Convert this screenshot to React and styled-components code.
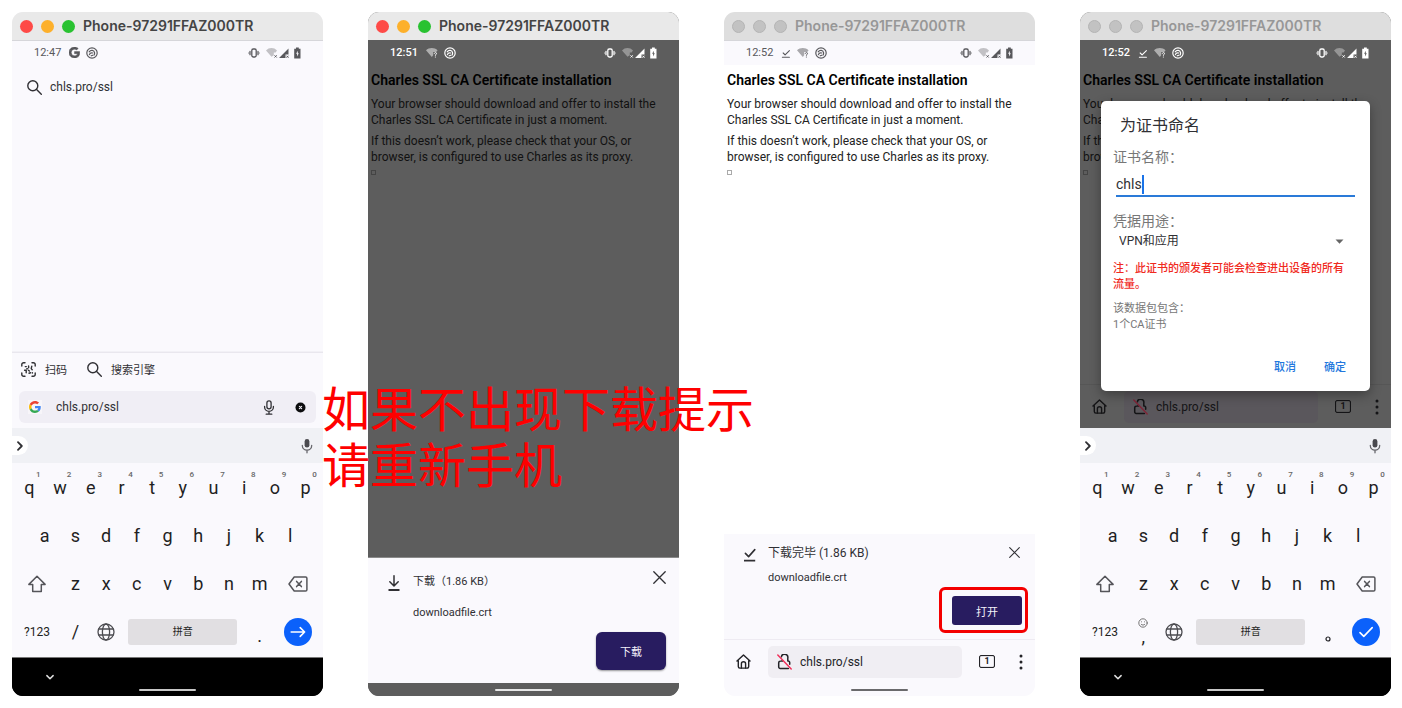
import React from "react";
import styled, { createGlobalStyle, css } from "styled-components";

const INK = "#303034";
const SHEET = "#faf9fd";
const DIM = "#5d5d5d";
const BRAND = "#281c60";
const LINK = "#2277dd";

const GlobalStyle = createGlobalStyle`
  * { box-sizing: border-box; }
  body {
    margin: 0;
    background: #fff;
    font-family: Roboto, "Noto Sans CJK SC", sans-serif;
    color: ${INK};
  }
  button, input, select {
    font: inherit;
    color: inherit;
    margin: 0;
    padding: 0;
    border: 0;
    background: none;
    outline: none;
  }
  button { cursor: pointer; }
  svg { display: block; flex: none; }
`;

/* ---------- layout ---------- */

const Board = styled.main`
  position: relative;
  display: grid;
  grid-template-columns: repeat(4, minmax(0, 1fr));
  gap: 45px;
  min-height: 100vh;
  padding: 12px 11px 12px 12px;
`;

const Slot = styled.div`
  position: relative;
  display: flex;
  flex-direction: column;
`;

const Annotation = styled.p`
  position: absolute;
  z-index: 2;
  top: 366px;
  left: -46px;
  margin: 0;
  white-space: nowrap;
  font-family: "Noto Sans CJK SC", sans-serif;
  font-size: 48px;
  line-height: 56px;
  color: #f00;
`;

const Window = styled.section`
  position: relative;
  flex: 1;
  display: flex;
  flex-direction: column;
  overflow: hidden;
  border-radius: 11px;
  background: ${(p) => p.$bg};
`;

const TitleBar = styled.header`
  display: flex;
  align-items: center;
  gap: 8px;
  height: 28px;
  padding-left: 8px;
  background: ${(p) => (p.$inactive ? "#dedede" : "#e9e9e9")};
  color: ${(p) => (p.$inactive ? "#979797" : "#444")};
`;

const Light = styled.button`
  flex: none;
  width: 13px;
  height: 13px;
  border-radius: 50%;
  background: ${(p) => p.$color};
  ${(p) => p.$inactive && "border: 1px solid #b4b4b4;"}
`;

const WindowName = styled.h2`
  margin: 0;
  padding-bottom: 1px;
  font-family: Inter, sans-serif;
  font-size: 14px;
  line-height: 16px;
  font-weight: 600;
  white-space: nowrap;
`;

const StatusBar = styled.div`
  display: flex;
  align-items: center;
  gap: 6px;
  height: 25px;
  padding: 0 22px 1px;
  border-top: 1px solid ${(p) => (p.$dim ? DIM : "#d6d6da")};
  background: ${(p) => (p.$dim ? DIM : SHEET)};
  color: ${(p) => (p.$dim ? "#fff" : "#58585c")};
  font-size: 11px;
`;

const Clock = styled.time`
  margin-right: 2px;
  font-weight: ${(p) => (p.$dim ? 500 : 400)};
`;

const Spacer = styled.span`
  flex: 1;
`;

/* ---------- browser ---------- */

const Suggestion = styled.a`
  display: flex;
  align-items: center;
  gap: 8px;
  margin: 12px 15px 0;
  font-size: 12px;
  line-height: 20px;
  color: ${INK};
  text-decoration: none;
`;

const Fill = styled.div`
  flex: 1;
`;

const QuickActions = styled.div`
  display: flex;
  align-items: center;
  gap: 20px;
  height: 33px;
  padding: 0 9px;
  border-top: 1px solid #e9e7ee;
  box-shadow: 0 -1px 0 #f2f1f6;
`;

const QuickAction = styled.button`
  display: flex;
  align-items: center;
  gap: 9px;
  font-size: 11px;
`;

const SearchField = styled.label`
  display: flex;
  align-items: center;
  height: 32px;
  margin: 6px 7px 5px;
  padding: 0 10px 0 9px;
  border-radius: 6px;
  background: #f0eef5;
`;

const Favicon = styled.span`
  display: grid;
  place-items: center;
  width: 14px;
  height: 14px;
  margin-right: 14px;
  background: #f7f5f9;
`;

const UrlInput = styled.input`
  flex: 1;
  min-width: 0;
  font-size: 12px;
  line-height: 20px;
`;

const FieldButton = styled.button`
  margin-left: 20px;
`;

const Page = styled.article`
  flex: 1;
  padding: 7px 3px 0;
  background: ${(p) => (p.$dim ? DIM : "#fff")};
  color: ${(p) => (p.$dim ? "#111" : "#222")};
`;

const PageHeading = styled.h1`
  margin: 0 0 8px;
  font-size: 14px;
  line-height: 16px;
  font-weight: 600;
  color: #000;
`;

const Paragraph = styled.p`
  margin: 0 0 5px;
  font-size: 12px;
  line-height: 16px;
`;

const Placeholder = styled.span`
  display: block;
  width: 5px;
  height: 5px;
  border: 1px solid ${(p) => (p.$dim ? "#444" : "#aaa")};
`;

const BrowserBar = styled.nav`
  display: flex;
  align-items: center;
  height: 44px;
  padding: 0 12px;
  border-top: 1px solid ${(p) => (p.$dim ? "#565656" : "#eeebf2")};
  background: ${(p) => (p.$dim ? DIM : SHEET)};
  color: ${(p) => (p.$dim ? "#141416" : "#232327")};
`;

const Address = styled.label`
  flex: 1;
  min-width: 0;
  display: flex;
  align-items: center;
  gap: 8px;
  height: 32px;
  margin: 0 17px;
  padding: 0 9px;
  border-radius: 5px;
  background: ${(p) => (p.$dim ? "#5a575c" : "#f0eef3")};
`;

const TabCount = styled.button`
  display: grid;
  place-items: center;
  width: 16px;
  height: 13px;
  margin-right: 24px;
`;

const TabNumber = styled.span`
  display: grid;
  place-items: center;
  width: 16px;
  height: 13px;
  border: 1px solid currentColor;
  border-radius: 2px;
  box-shadow: inset 0 0 1px currentColor;
  font-size: 9px;
  line-height: 11px;
  font-weight: 700;
`;

/* ---------- download sheets ---------- */

const Sheet = styled.section`
  display: grid;
  grid-template-columns: 25px minmax(0, 1fr) auto;
  padding: ${(p) => (p.$done ? "8px 13px 14px 19px" : "13px 13px 13px 20px")};
  background: ${SHEET};
  ${(p) => !p.$done && "box-shadow: 0 -1px 0 #8a8a8a;"}
`;

const SheetTitle = styled.h3`
  margin: 0;
  font-size: ${(p) => (p.$large ? "12px" : "11px")};
  line-height: 22px;
  height: 20px;
  font-weight: 400;
`;

const FileName = styled.p`
  grid-column: 2;
  margin: ${(p) => (p.$done ? "6px 0 8px" : "12px 0 9px")};
  font-size: 11px;
  line-height: 20px;
`;

const CloseButton = styled.button`
  align-self: start;
  padding: ${(p) => (p.$small ? "5px 2px 4px" : "0")};
`;

const Primary = styled.button`
  position: relative;
  grid-column: 1 / -1;
  justify-self: end;
  width: 70px;
  height: ${(p) => (p.$done ? "29px" : "38px")};
  border-radius: ${(p) => (p.$done ? "3px" : "6px")};
  background: ${BRAND};
  box-shadow: ${(p) => (p.$done ? "none" : "0 1px 2px #0006")};
  color: #f3f1fa;
  font-size: 11px;
  ${(p) =>
    p.$done &&
    css`
      &::after {
        content: "";
        position: absolute;
        inset: -9px -6px -8px -13px;
        border: 3px solid #f40000;
        border-radius: 6px;
      }
    `}
`;

/* ---------- bottom navigation ---------- */

const HomeArea = styled.div`
  display: flex;
  justify-content: center;
  height: 13px;
  padding-top: 6px;
  background: ${(p) => p.$bg};
`;

const Indicator = styled.span`
  width: 57px;
  height: 2px;
  border-radius: 1px;
  background: ${(p) => p.$color};
`;

const NavBar = styled.div`
  display: flex;
  flex-direction: column;
  height: 39px;
  border-top: 1px solid #777;
  background: #000;
`;

const HideButton = styled.button`
  align-self: flex-start;
  height: 25px;
  padding: 13px 0 0 34px;
`;

/* ---------- keyboard ---------- */

const Tray = styled.div`
  display: flex;
  align-items: center;
  justify-content: space-between;
  height: 35px;
  padding-right: 10px;
  background: #f0f1f5;
`;

const Expand = styled.button`
  display: grid;
  place-items: center;
  width: 16px;
  height: 19px;
  border-radius: 0 10px 10px 0;
  background: #fff;
`;

const Keys = styled.div`
  display: grid;
  grid-template-columns: repeat(20, minmax(0, 1fr));
  grid-auto-rows: 48px;
  padding: 1px 2px;
  background: ${SHEET};
`;

const Key = styled.button`
  position: relative;
  display: grid;
  place-items: center;
  grid-column: ${(p) => (p.$start ? `${p.$start} / ` : "")}span ${(p) => p.$span || 2};
  font-size: ${(p) => (p.$small ? "12px" : "18px")};
  line-height: 24px;
  color: #1f1f23;
`;

const Hint = styled.small`
  position: absolute;
  top: 6px;
  left: 50%;
  width: 18px;
  text-align: center;
  font-size: 8px;
  line-height: 9px;
  font-weight: 500;
  color: #666;
`;

const Space = styled(Key)`
  height: 26px;
  margin: 0 7px;
  align-self: center;
  border-radius: 3px;
  background: #e1dfe2;
  font-size: 10px;
`;

const Enter = styled.span`
  display: grid;
  place-items: center;
  width: 28px;
  height: 28px;
  border-radius: 50%;
  background: #0b61fb;
`;

const Low = styled.span`
  padding-top: 8px;
  line-height: 20px;
`;

const Stacked = styled.span`
  display: flex;
  flex-direction: column;
  align-items: center;
  line-height: 18px;
`;

/* ---------- certificate dialog ---------- */

const Dialog = styled.form`
  position: absolute;
  z-index: 1;
  top: 89px;
  left: 21px;
  right: 21px;
  display: flex;
  flex-direction: column;
  padding: 13px 15px 11px 12px;
  border-radius: 5px;
  background: #fff;
  box-shadow: 0 4px 12px #0005;
`;

const DialogTitle = styled.h3`
  margin: 0 0 9px 7px;
  font-size: 16px;
  line-height: 24px;
  font-weight: 400;
`;

const FieldLabel = styled.label`
  font-size: 14px;
  line-height: 20px;
  color: #777;
`;

const NameField = styled.div`
  display: flex;
  align-items: center;
  height: 24px;
  margin: 6px 0 14px 3px;
  border-bottom: 2px solid #2a7ad8;
`;

const NameInput = styled.input`
  field-sizing: content;
  max-width: 100%;
  font-size: 14px;
  line-height: 20px;
`;

const Caret = styled.span`
  width: 2px;
  height: 19px;
  background: #1a73e8;
`;

const SelectWrap = styled.div`
  display: flex;
  align-items: center;
  padding: 0 11px 0 6px;
`;

const Usage = styled.select`
  flex: 1;
  appearance: none;
  height: 20px;
  font-size: 12px;
`;

const Warning = styled.p`
  margin: 10px 0 8px;
  padding-right: 7px;
  font-size: 11px;
  line-height: 16px;
  font-weight: 500;
  color: #f02a1e;
`;

const Summary = styled.p`
  margin: 0;
  font-size: 11px;
  line-height: 16px;
  color: #777;
`;

const Actions = styled.div`
  display: flex;
  justify-content: flex-end;
  gap: 28px;
  margin-top: 23px;
  padding-right: 9px;
`;

const TextButton = styled.button`
  font-size: 11px;
  line-height: 24px;
  font-weight: 500;
  color: ${LINK};
`;

/* ---------- icons ---------- */

const Svg = ({ w, h = w, box, children, sw = 2 }) => (
  <svg
    width={w}
    height={h}
    viewBox={box || `0 0 ${w} ${h}`}
    fill="none"
    stroke="currentColor"
    strokeWidth={sw}
    strokeLinecap="round"
    strokeLinejoin="round"
    aria-hidden="true"
  >
    {children}
  </svg>
);

const GoogleG = ({ size, mono }) => (
  <svg width={size} height={size} viewBox="0 0 48 48" aria-hidden="true">
    <g stroke={mono || "none"} strokeWidth={mono ? 2 : 0}>
      <path fill={mono || "#EA4335"} d="M24 9.5c3.54 0 6.71 1.22 9.21 3.6l6.85-6.85C35.9 2.38 30.47 0 24 0 14.62 0 6.51 5.38 2.56 13.22l7.98 6.19C12.43 13.72 17.74 9.5 24 9.5z" />
      <path fill={mono || "#4285F4"} d="M46.98 24.55c0-1.57-.15-3.09-.38-4.55H24v9.02h12.94c-.58 2.96-2.26 5.48-4.78 7.18l7.73 6c4.51-4.18 7.09-10.36 7.09-17.65z" />
      <path fill={mono || "#FBBC05"} d="M10.53 28.59A14.5 14.5 0 0 1 9.77 24c0-1.6.28-3.14.76-4.59l-7.98-6.19A23.9 23.9 0 0 0 0 24c0 3.88.92 7.54 2.56 10.78l7.97-6.19z" />
      <path fill={mono || "#34A853"} d="M24 48c6.48 0 11.93-2.13 15.89-5.81l-7.73-6c-2.15 1.45-4.92 2.3-8.16 2.3-6.26 0-11.57-4.22-13.47-9.91l-7.98 6.19C6.51 42.62 14.62 48 24 48z" />
    </g>
  </svg>
);

const SearchIcon = () => (
  <Svg w={15} box="0 0 15 15" sw={1.4}>
    <circle cx="5.8" cy="5.8" r="5" />
    <path d="M9.6 9.6l4.7 4.7" />
  </Svg>
);

const ScanIcon = () => (
  <Svg w={15} box="0 0 15 15" sw={1.4}>
    <path d="M.8 4V2.6A1.8 1.8 0 0 1 2.6.8H4M11 .8h1.4a1.8 1.8 0 0 1 1.8 1.8V4M14.2 11v1.4a1.8 1.8 0 0 1-1.8 1.8H11M4 14.2H2.6a1.8 1.8 0 0 1-1.8-1.8V11" />
    <path d="M4.3 4.6h1M3.6 8.2h1.6v2.6M7.6 4v1.8M7.4 8.2l1 .9M8 11.2l1.6-.4M10.8 4.2l-.6 2.4 1 1.2M11.4 10.6v.4M5.8 6.8h.6" />
  </Svg>
);

const LineMic = () => (
  <Svg w={12} h={15} sw={1.3}>
    <rect x="3.9" y=".8" width="4.2" height="8" rx="2.1" />
    <path d="M1.6 6.4v.6a4.4 4.4 0 0 0 8.8 0v-.6M6 11.4v2.8M3.2 14.2h5.6" />
  </Svg>
);

const SolidMic = () => (
  <Svg w={12} h={16} sw={1.3}>
    <rect x="3.6" y="1" width="4.8" height="8.6" rx="2.4" fill="#4a4a4f" stroke="none" />
    <path stroke="#66666b" d="M1.3 7.4a4.7 4.7 0 0 0 9.4 0M6 12.2v2.6" />
  </Svg>
);

const ClearIcon = () => (
  <Svg w={11} sw={1.2}>
    <circle cx="5.5" cy="5.500" r="5" fill="#0c0c0e" stroke="none" />
    <path stroke="#f0eef5" d="M4.4 4.4l2.200 2.200M6.600 4.4L4.400 6.600" />
  </Svg>
);

const SwirlIcon = () => (
  <Svg w={12} sw={1.2}>
    <circle cx="6" cy="6" r="5.2" />
    <path d="M3.200 4.800C4.800 2.600 8.200 3 8.600 5.800c.1.900-.1 1.600-.5 2.200" />
    <path d="M3.400 7.600c.700-1.600 2.100-2.100 3.300-1.600M5.200 8.800l1.700-.6" />
  </Svg>
);

const WifiUnknown = () => (
  <Svg w={12} h={11} sw={1}>
    <path fill="currentColor" stroke="none" opacity=".5" d="M0 3.200C3 .200 8.600 .200 11.600 3.200L10.200 5H7.200v3.200L5.800 10z" />
    <path d="M8.300 6.300c.2-1.100 2.400-1 2.200.3-.1.700-1.100.8-1.100 1.700M9.400 10v.1" />
  </Svg>
);

const DoneSmall = () => (
  <Svg w={10} h={10} sw={1.1}>
    <path d="M2.200 5l1.900 1.900L8.400 2.600M1.400 9.300h7" />
  </Svg>
);

const VibrateIcon = () => (
  <Svg w={12} h={10} sw={1.3}>
    <rect x="3.800" y="1" width="4.400" height="8" rx="1.400" />
    <path opacity=".7" strokeWidth="1.800" d="M2 3.600v2.800M10 3.600v2.800" />
    <path opacity=".6" d="M.8 4.800v.4M11.200 4.800v.4" />
  </Svg>
);

const SignalIcons = () => (
  <Svg w={35} h={12} sw={1}>
    <path fill="currentColor" stroke="none" opacity=".35" d="M0 3.500C3 .200 8 .200 11 3.500L9.600 5.600H7.800v2.600L5.500 9.800z" />
    <path d="M8.800 8.600l1.600 1.600M10.400 8.600l-1.600 1.600" />
    <path fill="currentColor" stroke="none" d="M13 11l9.500-9.500v6h-3V11z" />
    <path d="M20.800 9l1.400 1.400M22.200 9l-1.400 1.400" />
    <path fill="currentColor" stroke="none" fillRule="evenodd" d="M30 .600h2.800v1.200H34.500V11.400H28.200V1.800H30zM31.800 3.800l-1.700 3h1v2.600l1.700-3.200h-1z" />
  </Svg>
);

const DownloadIcon = () => (
  <Svg w={12} h={20} sw={1.500}>
    <path d="M6 4.800v10M1.800 10.800L6 15l4.200-4.200" />
    <path strokeWidth="1.800" strokeLinecap="butt" d="M.5 19h11" />
  </Svg>
);

const DoneIcon = () => (
  <Svg w={13} h={20} sw={1.600}>
    <path d="M2.400 11.400l3.200 3.200 6.200-7" />
    <path strokeWidth="1.800" strokeLinecap="butt" d="M1 18.600h11.200" />
  </Svg>
);

const CloseIcon = ({ size }) => (
  <Svg w={size} box="0 0 13 13" sw={1.300}>
    <path d="M.8.800l11.400 11.400M12.200.800L.8 12.200" />
  </Svg>
);

const HomeIcon = () => (
  <Svg w={15} h={15} sw={1.400}>
    <path d="M1 7L7.500.900 14 7M2.300 6.400v6.200a1.500 1.500 0 0 0 1.500 1.500h7.400a1.500 1.500 0 0 0 1.500-1.500V6.400" />
    <path d="M5.400 14V9.800a2.100 2.100 0 0 1 4.200 0V14" />
  </Svg>
);

const InsecureIcon = ({ dim }) => (
  <Svg w={15} h={16} sw={1.500}>
    <path d="M4.400 2.800a3.200 3.200 0 0 1 6.400 1.200v3h.4a1.500 1.500 0 0 1 1.500 1.500v1.800M3.200 7.200a1.500 1.500 0 0 0-1.500 1.500v4.200a1.500 1.500 0 0 0 1.500 1.500h8.200" />
    <path d="M4.300 7h1.500" />
    <path stroke={dim ? "#7e2638" : "#f0325c"} d="M.8 1l13.400 14" />
  </Svg>
);

const MoreIcon = () => (
  <Svg w={4} h={16} sw={0}>
    <g fill="currentColor">
      <circle cx="2" cy="2" r="1.500" />
      <circle cx="2" cy="8" r="1.500" />
      <circle cx="2" cy="14" r="1.500" />
    </g>
  </Svg>
);

const ShiftIcon = () => (
  <Svg w={18} h={18} sw={1.500}>
    <path stroke="#55555a" d="M9 1.200L.9 9.400h3.800v7.200h8.600V9.400h3.800z" />
  </Svg>
);

const BackspaceIcon = () => (
  <Svg w={20} h={16} sw={1.500}>
    <path stroke="#55555a" d="M6.200 1h11.400a1.300 1.300 0 0 1 1.300 1.300v11.400a1.300 1.300 0 0 1-1.300 1.300H6.200L1 8z" />
    <path stroke="#55555a" d="M8.600 5.400l4.800 5.200M13.400 5.400l-4.800 5.200" />
  </Svg>
);

const GlobeIcon = () => (
  <Svg w={18} h={18} sw={1.300}>
    <g stroke="#4c4c51">
      <circle cx="9" cy="9" r="8" />
      <ellipse cx="9" cy="9" rx="3.600" ry="8" />
      <path d="M1.800 6h14.400M1.800 12h14.400" />
    </g>
  </Svg>
);

const SmileIcon = () => (
  <Svg w={10} h={10} sw={0.900}>
    <g stroke="#666">
      <circle cx="5" cy="5" r="4.200" />
      <path d="M3.200 6.300c.9 1.100 2.700 1.100 3.600 0M3.500 3.800v.1M6.500 3.800v.1" />
    </g>
  </Svg>
);

/* ---------- composed parts ---------- */

const LIGHTS = [
  ["Close", "#fe4a47"],
  ["Minimize", "#fdb02b"],
  ["Zoom", "#29c231"],
];

function Phone({ inactive, dim, time, status, bg, children }) {
  return (
    <Window $bg={bg}>
      <TitleBar $inactive={inactive}>
        {LIGHTS.map(([name, color]) => (
          <Light key={name} aria-label={name} $color={inactive ? "#c2c2c2" : color} $inactive={inactive} />
        ))}
        <WindowName>Phone-97291FFAZ000TR</WindowName>
      </TitleBar>
      <StatusBar $dim={dim}>
        <Clock $dim={dim}>{time}</Clock>
        {status}
        <SwirlIcon />
        <Spacer />
        <VibrateIcon />
        <SignalIcons />
      </StatusBar>
      {children}
    </Window>
  );
}

function CertificatePage({ dim }) {
  return (
    <Page $dim={dim}>
      <PageHeading>Charles SSL CA Certificate installation</PageHeading>
      <Paragraph>
        Your browser should download and offer to install the Charles SSL CA Certificate in just a moment.
      </Paragraph>
      <Paragraph>
        If this doesn’t work, please check that your OS, or browser, is configured to use Charles as its proxy.
      </Paragraph>
      <Placeholder $dim={dim} />
    </Page>
  );
}

function BottomBar({ dim }) {
  return (
    <BrowserBar $dim={dim}>
      <button aria-label="Home">
        <HomeIcon />
      </button>
      <Address $dim={dim}>
        <InsecureIcon dim={dim} />
        <UrlInput aria-label="Address" defaultValue="chls.pro/ssl" />
      </Address>
      <TabCount aria-label="Tabs">
        <TabNumber>1</TabNumber>
      </TabCount>
      <button aria-label="Menu">
        <MoreIcon />
      </button>
    </BrowserBar>
  );
}

function Keyboard({ chinese }) {
  return (
    <>
      <Tray>
        <Expand aria-label="Expand">
          <Svg w={6} h={10} sw={1.800}>
            <path d="M1 1.200L4.800 5 1 8.800" />
          </Svg>
        </Expand>
        <button aria-label="Voice input">
          <SolidMic />
        </button>
      </Tray>
      <Keys>
        {[..."qwertyuiop"].map((k, i) => (
          <Key key={k}>
            {k}
            <Hint>{(i + 1) % 10}</Hint>
          </Key>
        ))}
        {[..."asdfghjkl"].map((k, i) => (
          <Key key={k} $start={i === 0 ? 2 : undefined}>
            {k}
          </Key>
        ))}
        <Key $start={1} $span={3} aria-label="Shift">
          <ShiftIcon />
        </Key>
        {[..."zxcvbnm"].map((k) => (
          <Key key={k}>{k}</Key>
        ))}
        <Key $span={3} aria-label="Backspace">
          <BackspaceIcon />
        </Key>
        <Key $span={3} $small>
          ?123
        </Key>
        <Key>
          {chinese ? (
            <Stacked>
              <SmileIcon />,
            </Stacked>
          ) : (
            "/"
          )}
        </Key>
        <Key aria-label="Language">
          <GlobeIcon />
        </Key>
        <Space $span={8}>拼音</Space>
        <Key>
          {chinese ? (
            <Low>
              <Svg w={6} h={12} sw={1.200}>
                <circle cx="3" cy="9" r="2" />
              </Svg>
            </Low>
          ) : (
            <Low>.</Low>
          )}
        </Key>
        <Key $span={3} aria-label={chinese ? "Done" : "Go"}>
          <Enter>
            <Svg w={16} h={14} sw={1.600}>
              <path stroke="#fff" d={chinese ? "M2 7.600l3.800 3.800L14.200 2.600" : "M1.200 7h13.400M10.200 2.600L14.600 7l-4.400 4.400"} />
            </Svg>
          </Enter>
        </Key>
      </Keys>
      <NavBar>
        <HideButton aria-label="Hide keyboard">
          <Svg w={8} h={12} sw={1.500}>
            <path stroke="#ddd" d="M.9 4.600L4 7.700l3.100-3.100" />
          </Svg>
        </HideButton>
        <HomeArea $bg="#000">
          <Indicator $color="#c8c8c8" />
        </HomeArea>
      </NavBar>
    </>
  );
}

export default function App() {
  return (
    <>
      <GlobalStyle />
      <Board>
        <Slot>
          <Phone bg={SHEET} time="12:47" status={<GoogleG size={11} mono="#58585c" />}>
            <Suggestion href="#">
              <SearchIcon />
              chls.pro/ssl
            </Suggestion>
            <Fill />
            <QuickActions>
              <QuickAction>
                <ScanIcon />
                扫码
              </QuickAction>
              <QuickAction>
                <SearchIcon />
                搜索引擎
              </QuickAction>
            </QuickActions>
            <SearchField>
              <Favicon>
                <GoogleG size={12} />
              </Favicon>
              <UrlInput aria-label="Search or enter address" defaultValue="chls.pro/ssl" />
              <FieldButton aria-label="Voice search">
                <LineMic />
              </FieldButton>
              <FieldButton aria-label="Clear">
                <ClearIcon />
              </FieldButton>
            </SearchField>
            <Keyboard />
          </Phone>
        </Slot>

        <Slot>
          <Phone bg={DIM} dim time="12:51" status={<WifiUnknown />}>
            <CertificatePage dim />
            <Sheet>
              <DownloadIcon />
              <SheetTitle>下载（1.86 KB）</SheetTitle>
              <CloseButton aria-label="Close">
                <CloseIcon size={13} />
              </CloseButton>
              <FileName>downloadfile.crt</FileName>
              <Primary>下载</Primary>
            </Sheet>
            <HomeArea $bg={DIM}>
              <Indicator $color="#e8e8e8" />
            </HomeArea>
          </Phone>
          <Annotation>
            如果不出现下载提示
            <br />
            请重新手机
          </Annotation>
        </Slot>

        <Slot>
          <Phone
            bg="#fff"
            inactive
            time="12:52"
            status={
              <>
                <DoneSmall />
                <WifiUnknown />
              </>
            }
          >
            <CertificatePage />
            <Sheet $done>
              <DoneIcon />
              <SheetTitle $large>下载完毕 (1.86 KB)</SheetTitle>
              <CloseButton $small aria-label="Close">
                <CloseIcon size={11} />
              </CloseButton>
              <FileName $done>downloadfile.crt</FileName>
              <Primary $done>打开</Primary>
            </Sheet>
            <BottomBar />
            <HomeArea $bg={SHEET}>
              <Indicator $color="#6a6a6c" />
            </HomeArea>
          </Phone>
        </Slot>

        <Slot>
          <Phone
            bg={DIM}
            inactive
            dim
            time="12:52"
            status={
              <>
                <DoneSmall />
                <WifiUnknown />
              </>
            }
          >
            <CertificatePage dim />
            <BottomBar dim />
            <Keyboard chinese />
            <Dialog onSubmit={(e) => e.preventDefault()}>
              <DialogTitle>为证书命名</DialogTitle>
              <FieldLabel htmlFor="cert-name">证书名称：</FieldLabel>
              <NameField>
                <NameInput id="cert-name" defaultValue="chls" />
                <Caret />
              </NameField>
              <FieldLabel htmlFor="cert-usage">凭据用途：</FieldLabel>
              <SelectWrap>
                <Usage id="cert-usage">
                  <option>VPN和应用</option>
                </Usage>
                <Svg w={9} h={5} sw={0}>
                  <path fill="#666" d="M.5.500h8l-4 4.200z" />
                </Svg>
              </SelectWrap>
              <Warning>注：此证书的颁发者可能会检查进出设备的所有流量。</Warning>
              <Summary>
                该数据包包含：
                <br />
                1个CA证书
              </Summary>
              <Actions>
                <TextButton type="button">取消</TextButton>
                <TextButton type="submit">确定</TextButton>
              </Actions>
            </Dialog>
          </Phone>
        </Slot>
      </Board>
    </>
  );
}
